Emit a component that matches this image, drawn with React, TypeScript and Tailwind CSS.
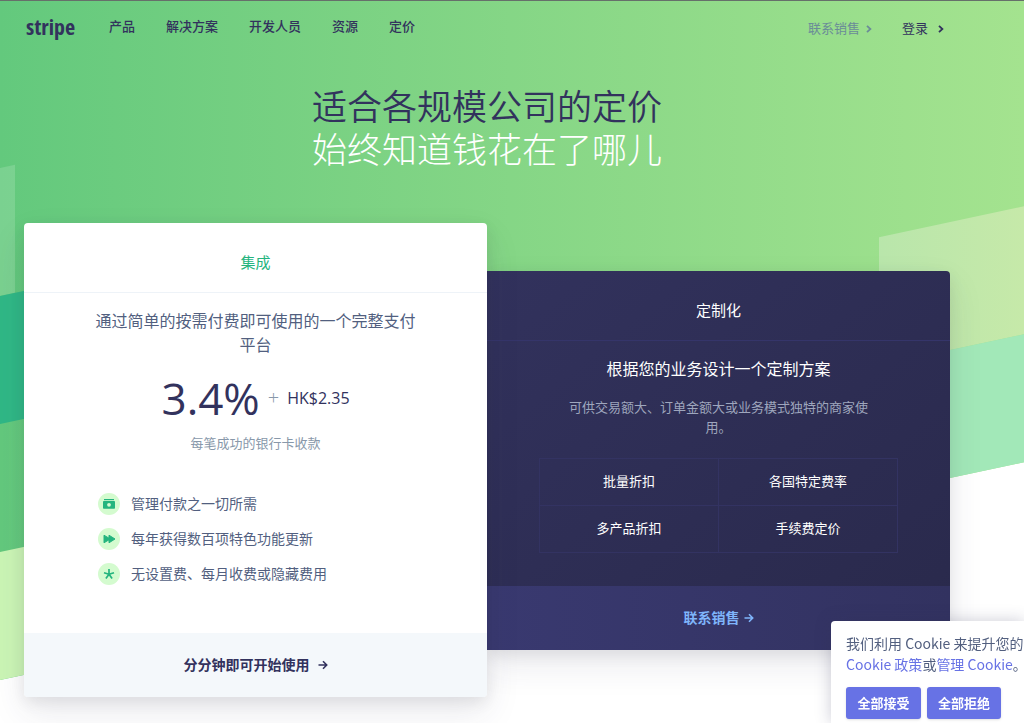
import type { ReactNode } from "react";

const navItems = ["产品", "解决方案", "开发人员", "资源", "定价"];
const discounts = [
  ["批量折扣", "各国特定费率"],
  ["多产品折扣", "手续费定价"],
];

function Chevron() {
  return (
    <svg width="6" height="8" viewBox="0 0 6 8" fill="none" stroke="currentColor" strokeWidth="1.8" aria-hidden="true">
      <path d="M1 0.8 4.4 4 1 7.2" />
    </svg>
  );
}

function Arrow() {
  return (
    <svg width="10" height="10" viewBox="0 0 10 10" fill="none" stroke="currentColor" strokeWidth="1.6" aria-hidden="true">
      <path d="M0.5 5H8.5M5 1.3 8.7 5 5 8.7" />
    </svg>
  );
}

function CashIcon() {
  return (
    <svg width="22" height="22" viewBox="0 0 22 22" aria-hidden="true">
      <circle cx="11" cy="11" r="11" fill="#d4fbcf" />
      <path d="M6 6h10v1.2H6z" fill="#24b47e" />
      <path d="M5.8 8h10.4a.8.8 0 0 1 .8.8v6.1a.8.8 0 0 1-.8.8H5.8a.8.8 0 0 1-.8-.8V8.8a.8.8 0 0 1 .8-.8z" fill="#24b47e" />
      <circle cx="11" cy="11.8" r="1.9" fill="#d4fbcf" />
    </svg>
  );
}

function ForwardIcon() {
  return (
    <svg width="22" height="22" viewBox="0 0 22 22" aria-hidden="true">
      <circle cx="11" cy="11" r="11" fill="#d4fbcf" />
      <path
        d="M6 7.2 11 10.2V7.2L17 11 11 14.8V11.8L6 14.8z"
        fill="#24b47e"
        stroke="#24b47e"
        strokeWidth="1"
        strokeLinejoin="round"
      />
    </svg>
  );
}

function StarIcon() {
  return (
    <svg width="22" height="22" viewBox="0 0 22 22" aria-hidden="true">
      <circle cx="11" cy="11" r="11" fill="#d4fbcf" />
      <path
        d="M11 11.3V6.1M11 11.3 16 9.7M11 11.3 14.1 15.6M11 11.3 7.9 15.6M11 11.3 6 9.7"
        stroke="#24b47e"
        strokeWidth="1.7"
      />
    </svg>
  );
}

function Feature({ icon, children }: { icon: ReactNode; children: ReactNode }) {
  return (
    <li className="flex h-[35px] items-center gap-[11px]">
      {icon}
      <span>{children}</span>
    </li>
  );
}

function Backdrop() {
  return (
    <div
      aria-hidden="true"
      className="absolute inset-x-0 -top-[41px] h-[720px] origin-top-left -skew-y-12 bg-linear-to-r from-[#63c97d] to-[#a4e38f]"
    >
      <div className="absolute -top-80 h-80 w-full bg-linear-to-r from-[#63c97d] to-[#a4e38f]" />
      <div className="absolute bottom-96 left-0 h-32 w-[15px] bg-white/15" />
      <div className="absolute bottom-64 left-0 h-32 w-1/4 bg-[#30b886]" />
      <div className="absolute bottom-0 left-0 h-32 w-1/2 bg-[#cbf5b5]" />
      <div className="absolute right-0 bottom-32 h-32 w-[145px] bg-linear-to-r from-[#b9e6ab] to-[#c6e9a9]" />
      <div className="absolute right-0 bottom-0 h-32 w-1/3 bg-[#a2e8b8]" />
    </div>
  );
}

function Header() {
  return (
    <header className="flex h-[52px] items-center justify-between pl-[2px]">
      <div className="flex items-center">
        <a
          href="#home"
          className="w-[52px] pb-[2px] font-['Noto_Sans_Condensed','Open_Sans_Condensed','Roboto_Condensed',sans-serif] text-[22px] leading-6 font-extrabold text-[#32325d]"
        >
          stripe
        </a>
        <nav className="ml-[31px] flex gap-[31px] text-[13px] font-medium text-[#32325d]">
          {navItems.map((item) => (
            <a key={item} href="#nav">
              {item}
            </a>
          ))}
        </nav>
      </div>
      <div className="flex gap-[30px] pt-1 pr-[6px] text-[13px]">
        <a href="#sales" className="flex items-center gap-[6px] text-[#6b8c98]">
          联系销售
          <Chevron />
        </a>
        <a href="#login" className="flex items-center gap-[10px] text-[#32325d]">
          登录
          <Chevron />
        </a>
      </div>
    </header>
  );
}

function IntegratedCard() {
  return (
    <section className="relative z-10 flex-1 rounded bg-white text-center shadow-[0_15px_35px_rgba(50,50,93,0.1),0_5px_15px_rgba(0,0,0,0.08)]">
      <h2 className="flex h-[70px] items-center justify-center border-b border-[#eef3f8] pt-[10px] text-[15px] text-[#24b47e]">
        集成
      </h2>
      <div className="h-[340px] px-[71px] pt-4">
        <p className="text-base leading-6 text-[#525f7f]">通过简单的按需付费即可使用的一个完整支付平台</p>
        <div className="mt-[13px] flex h-14 items-center justify-center gap-2 text-[#32325d]">
          <span className="text-[44px] leading-none font-normal">3.4%</span>
          <span className="text-xl font-light text-[#8898aa]">+</span>
          <span className="text-base">HK$2.35</span>
        </div>
        <p className="mt-[7px] text-[13px] leading-5 text-[#8898aa]">每笔成功的银行卡收款</p>
        <ul className="mt-[33px] pl-[3px] text-left text-sm text-[#525f7f]">
          <Feature icon={<CashIcon />}>管理付款之一切所需</Feature>
          <Feature icon={<ForwardIcon />}>每年获得数百项特色功能更新</Feature>
          <Feature icon={<StarIcon />}>无设置费、每月收费或隐藏费用</Feature>
        </ul>
      </div>
      <a
        href="#start"
        className="flex h-16 items-center justify-center gap-2 rounded-b bg-[#f4f8fb] text-sm font-bold text-[#32325d]"
      >
        分分钟即可开始使用
        <Arrow />
      </a>
    </section>
  );
}

function CustomCard() {
  return (
    <section className="mt-12 flex-1 rounded-r bg-linear-to-br from-[#32325d] to-[#29294b] text-center text-white shadow-[0_15px_35px_rgba(50,50,93,0.1),0_5px_15px_rgba(0,0,0,0.08)]">
      <h2 className="flex h-[70px] items-center justify-center border-b border-[#35356a] pt-[10px] text-[15px]">定制化</h2>
      <div className="h-[245px] px-[52px] pt-4">
        <p className="text-base leading-6">根据您的业务设计一个定制方案</p>
        <p className="mx-auto mt-4 max-w-[305px] text-[13px] leading-5 text-[#9ea6bd]">
          可供交易额大、订单金额大或业务模式独特的商家使用。
        </p>
        <table className="mt-[21px] w-full table-fixed border-collapse text-[13px]">
          <tbody>
            {discounts.map((row) => (
              <tr key={row[0]}>
                {row.map((cell) => (
                  <td key={cell} className="h-[47px] border border-[#333362]">
                    {cell}
                  </td>
                ))}
              </tr>
            ))}
          </tbody>
        </table>
      </div>
      <a
        href="#sales"
        className="flex h-16 items-center justify-center gap-1 rounded-br bg-linear-to-r from-[#393970] to-[#323260] text-sm font-bold text-[#7fb5fb]"
      >
        联系销售
        <Arrow />
      </a>
    </section>
  );
}

function CookieNotice() {
  return (
    <aside className="fixed right-0 bottom-0 z-20 w-[193px] rounded-tl bg-white pt-3 pb-1 pl-[15px] font-['Noto_Sans_CJK_SC',sans-serif] text-sm whitespace-nowrap text-[#525f7f] shadow-[0_0_16px_rgba(50,50,93,0.25)]">
      <div className="overflow-hidden">
        <p className="leading-[21px]">
          我们利用 Cookie 来提升您的体验。
          <br />
          <a href="#policy" className="text-[#6772e5]">
            Cookie 政策
          </a>
          或
          <a href="#manage" className="text-[#6772e5]">
            管理 Cookie
          </a>
          。
        </p>
      </div>
      <div className="mt-3 flex gap-[6px] text-[13px] font-bold text-white">
        <button type="button" className="h-8 w-[75px] rounded-[3px] bg-[#6772e5] shadow">
          全部接受
        </button>
        <button type="button" className="h-8 w-[74px] rounded-[3px] bg-[#6772e5] shadow">
          全部拒绝
        </button>
      </div>
    </aside>
  );
}

export default function App() {
  return (
    <div className="relative min-h-screen overflow-hidden border-t border-[#66706a] bg-white font-['Open_Sans','Noto_Sans_CJK_SC',sans-serif]">
      <Backdrop />
      <div className="relative pr-[74px] pb-6 pl-6">
        <Header />
        <h1 className="pt-8 text-center text-[35px] leading-[43px] font-[360] text-[#32325d]">
          适合各规模公司的定价
          <br />
          <span className="font-light text-white">始终知道钱花在了哪儿</span>
        </h1>
        <main className="mt-[52px] flex items-start">
          <IntegratedCard />
          <CustomCard />
        </main>
      </div>
      <CookieNotice />
    </div>
  );
}
